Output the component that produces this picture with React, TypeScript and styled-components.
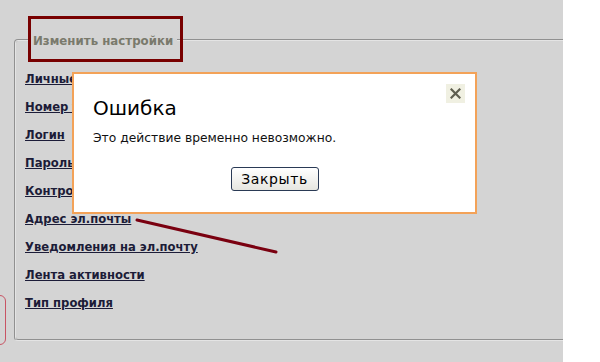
import React from "react";
import styled, { createGlobalStyle } from "styled-components";

const Global = createGlobalStyle`
  html, body { margin: 0; padding: 0; background: #ffffff; }
  body { font-family: "DejaVu Sans", Verdana, sans-serif; }
`;

const Page = styled.div`
  position: relative;
  width: 563px;
  height: 362px;
  background: #d4d4d4;
  overflow: hidden;
  padding-top: 32px;
  box-sizing: border-box;
`;

const Fieldset = styled.fieldset`
  margin: 0 0 0 14px;
  width: 620px;
  border: 2px groove #e4e4e4;
  border-radius: 4px;
  padding: 16px 9px 23px 9px;
  box-sizing: border-box;
`;

const Legend = styled.legend`
  margin-left: 4px;
  padding: 2px 4px 0 4px;
  font-family: "DejaVu Sans", Verdana, sans-serif;
  font-size: 11.8px;
  font-weight: bold;
  line-height: 14px;
  color: #7a7a6c;
`;

const LinkList = styled.ul`
  list-style: none;
  margin: 0;
  padding: 0;
  display: flex;
  flex-direction: column;
`;

const LinkItem = styled.li`
  line-height: 28px;
  height: 28px;
`;

const SettingLink = styled.a`
  font-family: "DejaVu Sans", Verdana, sans-serif;
  font-size: 11.6px;
  font-weight: bold;
  color: #1c1c38;
  text-decoration: underline;
`;

const EdgeTab = styled.div`
  position: absolute;
  left: -10px;
  top: 295px;
  width: 16px;
  height: 50px;
  border: 1px solid #c85464;
  border-radius: 6px;
  box-sizing: border-box;
`;

const Highlight = styled.div`
  position: absolute;
  left: 28px;
  top: 16px;
  width: 155px;
  height: 46px;
  border: 3px solid #780000;
  box-sizing: border-box;
`;

const Arrow = styled.svg`
  position: absolute;
  left: 0;
  top: 0;
  width: 563px;
  height: 362px;
  pointer-events: none;
`;

const Dialog = styled.div`
  position: absolute;
  left: 72px;
  top: 72px;
  width: 405px;
  height: 142px;
  box-sizing: border-box;
  background: #ffffff;
  border: 2px solid #f3a258;
  padding: 22px 19px 0 19px;
  display: flex;
  flex-direction: column;
`;

const Title = styled.h2`
  margin: 0;
  font-family: "DejaVu Sans", Tahoma, sans-serif;
  font-weight: normal;
  font-size: 20px;
  line-height: 24px;
  color: #000000;
`;

const Message = styled.p`
  margin: 10px 0 0 0;
  font-family: "DejaVu Sans", Verdana, sans-serif;
  font-size: 12.3px;
  line-height: 16px;
  color: #111111;
`;

const Actions = styled.div`
  display: flex;
  justify-content: center;
  margin-top: 21px;
`;

const CloseButton = styled.button`
  height: 24px;
  width: 88px;
  padding: 0;
  border: 1px solid #2a3a55;
  border-radius: 3px;
  background: linear-gradient(#ffffff, #e6e6e0);
  font-family: "DejaVu Sans", Tahoma, sans-serif;
  font-size: 14px;
  letter-spacing: 0.6px;
  color: #000000;
`;

const CloseX = styled.div`
  position: absolute;
  right: 10px;
  top: 10px;
  width: 19px;
  height: 19px;
  background: #f0f0e2;
  display: flex;
  align-items: center;
  justify-content: center;
`;

const links = [
  "Личные данные",
  "Номер телефона",
  "Логин",
  "Пароль",
  "Контрольный вопрос",
  "Адрес эл.почты",
  "Уведомления на эл.почту",
  "Лента активности",
  "Тип профиля",
];

export default function App() {
  return (
    <>
      <Global />
      <Page>
        <Fieldset>
          <Legend>Изменить настройки</Legend>
          <LinkList>
            {links.map((l) => (
              <LinkItem key={l}>
                <SettingLink href="#">{l}</SettingLink>
              </LinkItem>
            ))}
          </LinkList>
        </Fieldset>
        <EdgeTab />
        <Highlight />
        <Arrow viewBox="0 0 563 362">
          <line x1="137" y1="220" x2="276" y2="252" stroke="#7a0010" strokeWidth="3" strokeLinecap="round" />
        </Arrow>
        <Dialog>
          <CloseX>
            <svg width="11" height="11" viewBox="0 0 11 11">
              <path d="M1.5 1.5 L9.5 9.5 M9.5 1.5 L1.5 9.5" stroke="#5e5e50" strokeWidth="2.2" strokeLinecap="square" />
            </svg>
          </CloseX>
          <Title>Ошибка</Title>
          <Message>Это действие временно невозможно.</Message>
          <Actions>
            <CloseButton>Закрыть</CloseButton>
          </Actions>
        </Dialog>
      </Page>
    </>
  );
}
